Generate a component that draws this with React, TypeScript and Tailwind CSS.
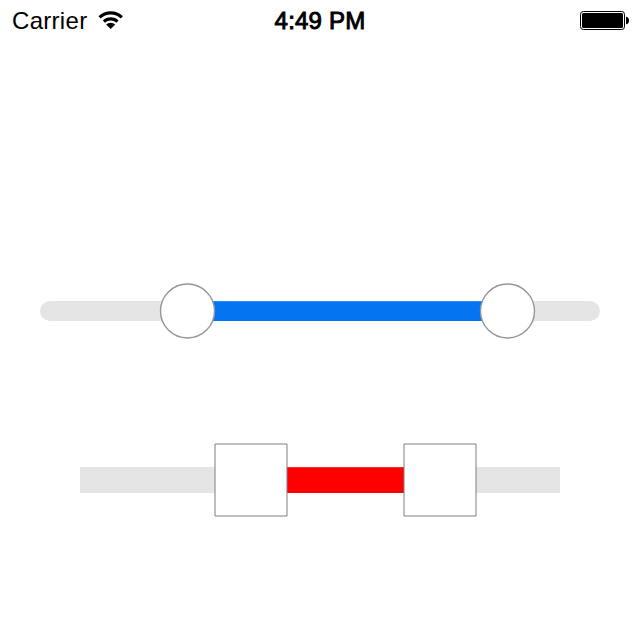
import React from 'react';

function WifiIcon() {
  return (
    <svg className="h-[20px] w-[28px]" viewBox="0 0 28 20" fill="none" stroke="#000" strokeWidth="3.2">
      <path d="M2.6 7.4a16 16 0 0 1 22.2 0" />
      <path d="M6.9 11.6a9.9 9.9 0 0 1 13.6 0" />
      <path d="M13.7 19l-4.6-4.5a6.6 6.6 0 0 1 9.2 0z" fill="#000" stroke="none" />
    </svg>
  );
}

function BatteryIcon() {
  return (
    <svg className="h-[20px] w-[50px]" viewBox="0 0 50 20">
      <rect x="0.5" y="0.5" width="44" height="18" rx="2.8" fill="#fff" stroke="#000" />
      <rect x="2" y="2" width="41" height="15" rx="1.5" fill="#000" />
      <path d="M46 5.8c1.9 0 3 1.6 3 3.7s-1.1 3.7-3 3.7z" fill="#000" />
    </svg>
  );
}

function StatusBar() {
  return (
    <header className="flex h-10 items-start text-[24px] leading-[42px] text-black">
      <div className="flex w-[260px] items-start pl-[12px]">
        <span className="w-[76px] whitespace-nowrap tracking-[0.3px]">Carrier</span>
        <span className="ml-[9px] mt-[10px]">
          <WifiIcon />
        </span>
      </div>
      <div className="w-[120px] whitespace-nowrap text-center tracking-[0.2px] [-webkit-text-stroke:0.95px_#000]">4:49 PM</div>
      <div className="flex flex-1 pl-[200px] pt-[11px]">
        <BatteryIcon />
      </div>
    </header>
  );
}

function RoundThumb({ className }: { className: string }) {
  return (
    <svg className={'absolute h-[56px] w-[57px] ' + className} viewBox="0 0 57 56">
      <circle cx="28.5" cy="28" r="27" fill="#fff" stroke="#969696" strokeWidth="1.4" />
    </svg>
  );
}

function SquareThumb({ className }: { className: string }) {
  return (
    <svg className={'absolute h-[74px] w-[74px] ' + className} viewBox="0 0 74 74">
      <rect x="1" y="1" width="72" height="72" fill="#fff" />
      <path d="M1 1H73M1 73H73M1 1V73M73 1V73" stroke="#7f7f7f" fill="none" />
    </svg>
  );
}

export default function App() {
  return (
    <main className="flex h-[626px] w-[640px] flex-col overflow-hidden bg-white font-['Liberation_Sans',Arial,sans-serif]">
      <StatusBar />
      <div className="relative mt-[261px] flex h-5 w-[560px] self-center rounded-full bg-[#e5e5e5] pl-[147px]">
        <div className="w-[320px] border-t border-[#268aff] bg-[#0574f0]" />
        <RoundThumb className="left-[119px] top-[-18px]" />
        <RoundThumb className="left-[439px] top-[-18px]" />
      </div>
      <div className="relative mt-[146px] flex h-[26px] w-[480px] self-center bg-[#e5e5e5] pl-[171px]">
        <div className="w-[189px] border-t border-[#ff2626] bg-[#ff0000]" />
        <SquareThumb className="left-[134px] top-[-24px]" />
        <SquareThumb className="left-[323px] top-[-24px]" />
      </div>
    </main>
  );
}
